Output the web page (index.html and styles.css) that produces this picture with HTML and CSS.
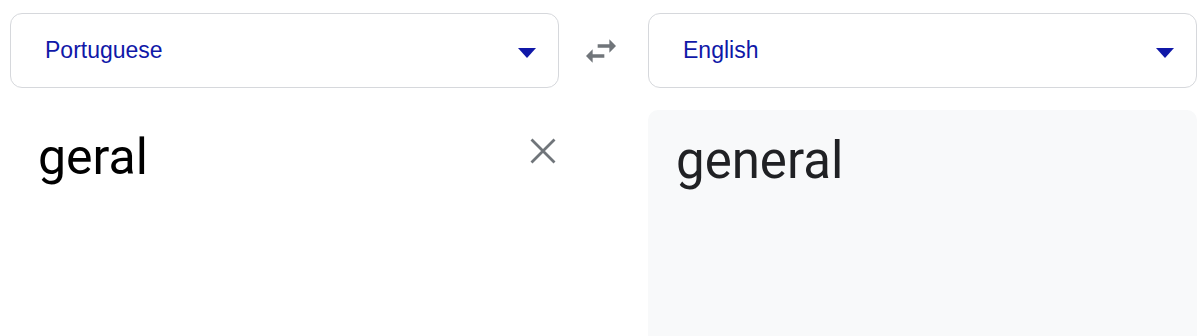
FILE: index.html
```html
<!DOCTYPE html>
<html lang="en">
<head>
<meta charset="utf-8">
<title>Translate</title>
<link rel="stylesheet" href="styles.css">
</head>
<body>
<div class="translator">
  <div class="lang-row">
    <div class="lang-select">
      <span class="lang-name">Portuguese</span>
      <svg class="caret" width="18" height="10" viewBox="0 0 18 10"><path d="M0 0H18L9 10Z" fill="#1018a8"/></svg>
    </div>
    <div class="swap">
      <svg width="40" height="40" viewBox="0 0 24 24"><path fill="#70757a" d="M6.99 11L3 15l3.99 4v-3H14v-2H6.99v-3zM21 9l-3.99-4v3H10v2h7.01v3L21 9z"/></svg>
    </div>
    <div class="lang-select">
      <span class="lang-name">English</span>
      <svg class="caret" width="18" height="10" viewBox="0 0 18 10"><path d="M0 0H18L9 10Z" fill="#1018a8"/></svg>
    </div>
  </div>
  <div class="text-row">
    <div class="source">
      <div class="source-text">geral</div>
      <svg class="clear" width="26" height="26" viewBox="0 0 26 26"><path d="M1.5 1.5L24.5 24.5M24.5 1.5L1.5 24.5" stroke="#70757a" stroke-width="2.8" fill="none"/></svg>
    </div>
    <div class="spacer"></div>
    <div class="target">
      <div class="target-text">general</div>
    </div>
  </div>
</div>
</body>
</html>
```

FILE: styles.css
```css
html, body {
  margin: 0;
  padding: 0;
  background: #ffffff;
}
body {
  height: 336px;
  overflow: hidden;
}
.translator {
  padding: 13px 0 0 10px;
}
.lang-row {
  display: grid;
  grid-template-columns: 549px 89px 549px;
  height: 75px;
}
.lang-select {
  box-sizing: border-box;
  border: 1px solid #d6d8dc;
  border-radius: 12px;
  display: flex;
  align-items: center;
  justify-content: space-between;
  padding: 0 22px 0 34px;
}
.lang-name {
  font-family: "Liberation Sans", Arial, sans-serif;
  font-size: 23px;
  color: #1018a8;
  padding-bottom: 1px;
}
.caret {
  display: block;
  margin-top: 5px;
}
.swap {
  display: flex;
  align-items: center;
  padding-left: 22px;
}
.swap svg {
  display: block;
}
.text-row {
  display: grid;
  grid-template-columns: 549px 89px 549px;
  margin-top: 22px;
  height: 226px;
}
.source {
  display: flex;
  justify-content: space-between;
  align-items: flex-start;
  padding-left: 28px;
}
.source-text {
  font-family: Roboto, "Noto Sans", sans-serif;
  font-size: 50px;
  line-height: 58px;
  color: #000000;
  padding-top: 18px;
}
.clear {
  display: block;
  margin: 28px 3px 0 0;
}
.target {
  background: #f8f9fa;
  border-radius: 10px 10px 0 0;
  padding: 22px 28px 0 28px;
}
.target-text {
  font-family: Roboto, "Noto Sans", sans-serif;
  font-size: 51px;
  line-height: 58px;
  color: #202124;
}
```
